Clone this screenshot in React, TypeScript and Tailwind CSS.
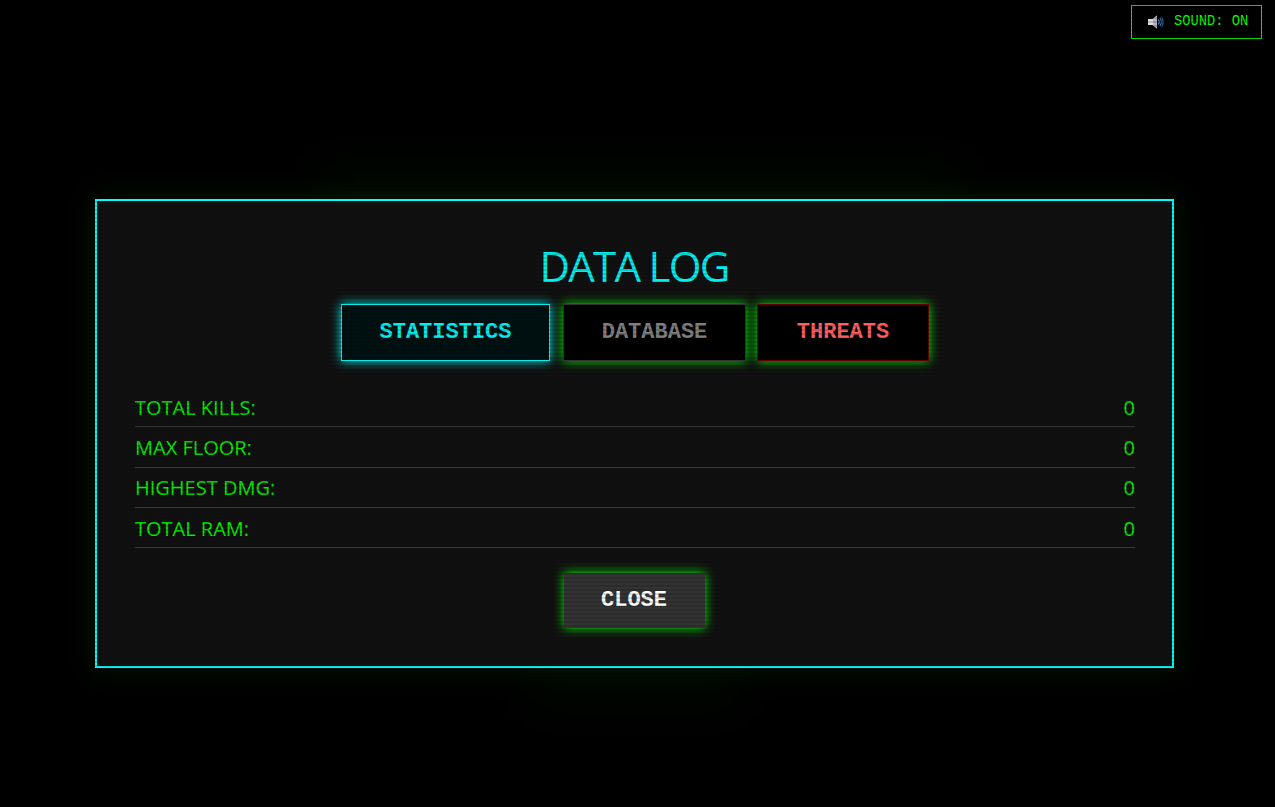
const stats = [
  { label: 'TOTAL KILLS:', value: 0 },
  { label: 'MAX FLOOR:', value: 0 },
  { label: 'HIGHEST DMG:', value: 0 },
  { label: 'TOTAL RAM:', value: 0 },
];

function SpeakerIcon() {
  return (
    <svg width="16" height="14" viewBox="0 0 16 14" fill="none">
      <path d="M0 4H4.5L9 0.5V13.5L4.5 10H0Z" fill="#dcdce0" />
      <path d="M5 4L9 0.5V13.5L5 10Z" fill="#b4b4bc" />
      <path d="M10.5 4.5C11.4 6 11.4 8 10.5 9.5" stroke="#5a9be0" strokeWidth="1.1" />
      <path d="M12 3C13.6 5.2 13.6 8.8 12 11" stroke="#3f86d0" strokeWidth="1.1" />
      <path d="M13.6 2C15.6 4.8 15.6 9.2 13.6 12" stroke="#2a68b0" strokeWidth="1.1" />
    </svg>
  );
}

export default function App() {
  return (
    <div className="relative h-[807px] overflow-hidden bg-black pt-[199px] pl-[95px]">
      {/* faint glow from whatever sits behind the modal */}
      <div className="absolute left-[320px] top-[172px] h-[60px] w-[640px] bg-[#00ff00]/[0.04] blur-xl" />
      <div className="absolute left-[530px] top-[650px] h-[50px] w-[210px] bg-[#00ff00]/[0.035] blur-xl" />

      <div className="relative h-[469px] w-[1079px] border-2 border-[#00ffff] bg-[#111111] pl-[38px] pr-[37px] pt-[36px] shadow-[0_0_30px_rgba(0,255,0,0.1)]">
        <h1 className="pr-[2px] text-center text-[42px] leading-[57px] font-normal text-[#00f0f0] font-['Open_Sans','Noto_Sans',sans-serif] tracking-[-1.7px]">
          DATA LOG
        </h1>

        <div className="mt-[10px] flex justify-center font-['Liberation_Mono',monospace] text-[22px] font-bold">
          <button className="h-[57px] w-[209px] border border-[#00f0f0] bg-[#001112] text-[#00f0f0] shadow-[0_0_10px_#00ffff]">
            STATISTICS
          </button>
          <button className="ml-[13px] h-[57px] w-[183px] border border-[#333333] bg-black text-[#808080] shadow-[0_0_10px_#00ff00]">
            DATABASE
          </button>
          <button className="ml-[11px] h-[57px] w-[172px] border border-[#660000] bg-black text-[#ff5f5f] shadow-[0_0_10px_#00ff00]">
            THREATS
          </button>
        </div>

        <div className="mt-[26px] font-['Open_Sans','Noto_Sans',sans-serif] text-[20px] text-[#00f000]">
          {stats.map(row => (
            <div
              key={row.label}
              className="flex h-[40.33px] items-center justify-between border-b border-[#3a3a3a] pt-[2px]"
            >
              <span>{row.label}</span>
              <span>{row.value}</span>
            </div>
          ))}
        </div>

        <div className="mt-[25px] flex justify-center">
          <button className="mr-[2px] h-[55px] w-[141px] bg-[#333333] font-['Liberation_Mono',monospace] text-[22px] font-bold text-white shadow-[0_0_10px_#00ff00]">
            CLOSE
          </button>
        </div>
      </div>

      <button className="absolute right-[13px] top-[5px] flex h-[34px] w-[131px] items-center border border-[#00ff00] bg-black pl-[16px] font-['Liberation_Mono',monospace] text-[13.75px] text-[#00ff00]">
        <SpeakerIcon />
        <span className="ml-[10px]">SOUND: ON</span>
      </button>

      {/* scanlines */}
      <div className="pointer-events-none absolute inset-0 bg-[repeating-linear-gradient(0deg,rgba(0,0,0,0.15)_0px,rgba(0,0,0,0.15)_2px,transparent_2px,transparent_4px)]" />
    </div>
  );
}
